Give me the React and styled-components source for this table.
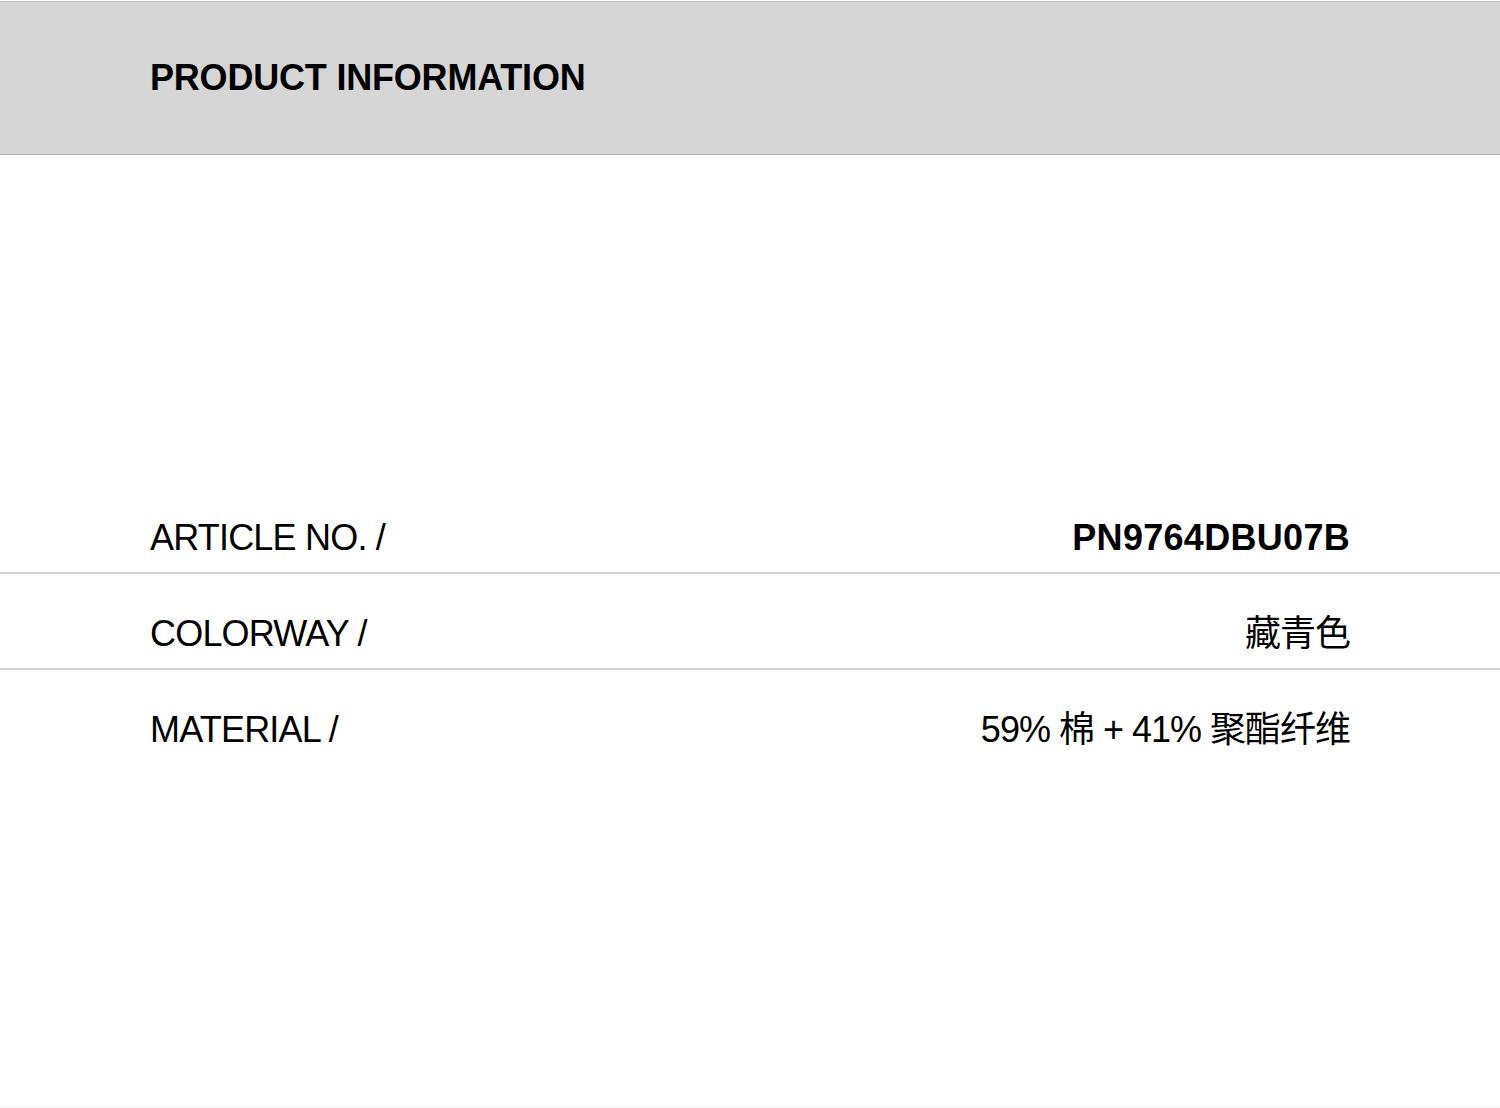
import styled, { createGlobalStyle } from "styled-components";

const GlobalStyle = createGlobalStyle`
  html, body {
    margin: 0;
    padding: 0;
    background: #ffffff;
  }
  body {
    font-family: "Liberation Sans", Arial, "Noto Sans CJK SC", sans-serif;
    color: #000;
  }
`;

const Page = styled.div`
  width: 1500px;
  height: 1108px;
  box-sizing: border-box;
  padding-top: 1px;
  border-bottom: 1px solid #f4f4f4;
  display: flex;
  flex-direction: column;
`;

const Header = styled.header`
  height: 154px;
  flex-shrink: 0;
  box-sizing: border-box;
  background: #d6d6d6;
  border-top: 1px solid #c4c4c4;
  border-bottom: 1px solid #b0b0b0;
  padding: 0 150px;
  display: flex;
  align-items: center;
`;

const Title = styled.h1`
  margin: 0;
  font-size: 36px;
  font-weight: 700;
  letter-spacing: -0.2px;
  line-height: 1;
`;

const InfoList = styled.dl`
  margin: 323px 0 0;
  display: flex;
  flex-direction: column;
`;

const Row = styled.div`
  height: 96px;
  box-sizing: border-box;
  padding: 42px 150px 0;
  display: flex;
  align-items: flex-start;
  justify-content: space-between;
  border-bottom: ${(p) => (p.$last ? "none" : "2px solid #d2d2d2")};
`;

const Label = styled.dt`
  margin: 0;
  font-size: 36px;
  letter-spacing: -0.8px;
  line-height: 36px;
`;

const Value = styled.dd`
  margin: 0;
  font-size: 36px;
  font-weight: ${(p) => (p.$bold ? 700 : 400)};
  letter-spacing: ${(p) => (p.$bold ? "0.3px" : "-1px")};
  line-height: 36px;
`;

const rows = [
  { label: "ARTICLE NO. /", value: "PN9764DBU07B", bold: true },
  { label: "COLORWAY /", value: "藏青色" },
  { label: "MATERIAL /", value: "59% 棉 + 41% 聚酯纤维" },
];

export default function App() {
  return (
    <>
      <GlobalStyle />
      <Page>
        <Header>
          <Title>PRODUCT INFORMATION</Title>
        </Header>
        <InfoList>
          {rows.map((row, i) => (
            <Row key={row.label} $last={i === rows.length - 1}>
              <Label>{row.label}</Label>
              <Value $bold={row.bold}>{row.value}</Value>
            </Row>
          ))}
        </InfoList>
      </Page>
    </>
  );
}
